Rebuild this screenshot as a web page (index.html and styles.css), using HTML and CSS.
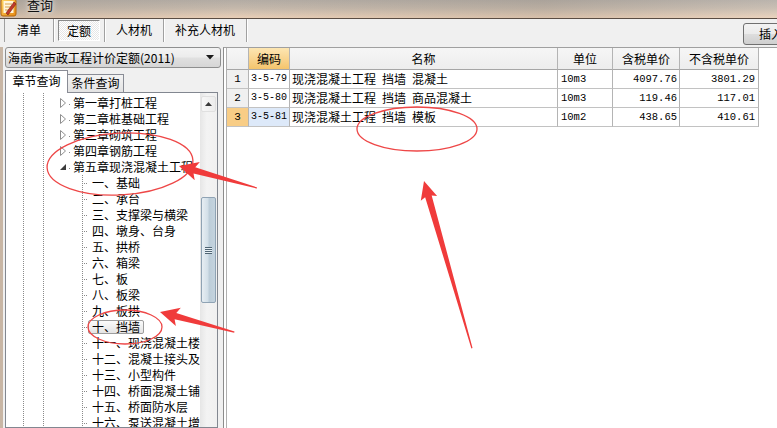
FILE: index.html
```html
<!DOCTYPE html>
<html lang="zh-CN">
<head>
<meta charset="utf-8">
<title>查询</title>
<link rel="stylesheet" href="styles.css">
</head>
<body>
<div class="app">
  <header class="titlebar">
    <svg class="app-icon" width="18" height="18" viewBox="0 0 18 18">
      <defs>
        <linearGradient id="ig" x1="0" y1="0" x2="1" y2="1">
          <stop offset="0" stop-color="#ffd866"/>
          <stop offset="1" stop-color="#e88a12"/>
        </linearGradient>
      </defs>
      <rect x="1" y="0" width="15" height="17" rx="2" fill="url(#ig)" stroke="#b5650a"/>
      <rect x="3.5" y="2" width="10" height="12" fill="#fff6dc"/>
      <path d="M5 5h7M5 8h7M5 11h5" stroke="#d9a24a" stroke-width="1"/>
      <path d="M6 14 L14 3 L16 5 L8 16 Z" fill="#c0392b" stroke="#7a2016" stroke-width="0.6"/>
    </svg>
    <span class="title">查询</span>
  </header>

  <div class="toolbar">
    <nav class="tabs">
      <div class="tab t1">清单</div>
      <div class="tab t2"><span class="pressed">定额</span></div>
      <div class="tab t3">人材机</div>
      <div class="tab t4">补充人材机</div>
    </nav>
    <button class="insert-btn" type="button">插入</button>
  </div>

  <div class="main">
    <aside class="left">
      <div class="select">
        <span class="select-text">海南省市政工程计价定额(2011)</span>
        <svg class="select-arrow" width="8" height="5" viewBox="0 0 8 5"><path d="M0 0h8L4 4.5z" fill="#1a1a1a"/></svg>
      </div>
      <div class="subtabs">
        <div class="subtab active">章节查询</div>
        <div class="subtab">条件查询</div>
      </div>
      <div class="tree-box">
        <div class="tree">
          <div class="chapter">
            <svg class="tw" width="13" height="16" viewBox="0 0 13 16"><path d="M0.5 3.5 L5.5 8 L0.5 12.5 Z" fill="#fff" stroke="#8e8e8e"/><rect x="9" y="9" width="1" height="1" fill="#8a8a8a"/></svg>
            <span>第一章打桩工程</span>
          </div>
          <div class="chapter">
            <svg class="tw" width="13" height="16" viewBox="0 0 13 16"><path d="M0.5 3.5 L5.5 8 L0.5 12.5 Z" fill="#fff" stroke="#8e8e8e"/><rect x="9" y="9" width="1" height="1" fill="#8a8a8a"/></svg>
            <span>第二章桩基础工程</span>
          </div>
          <div class="chapter">
            <svg class="tw" width="13" height="16" viewBox="0 0 13 16"><path d="M0.5 3.5 L5.5 8 L0.5 12.5 Z" fill="#fff" stroke="#8e8e8e"/><rect x="9" y="9" width="1" height="1" fill="#8a8a8a"/></svg>
            <span>第三章砌筑工程</span>
          </div>
          <div class="chapter">
            <svg class="tw" width="13" height="16" viewBox="0 0 13 16"><path d="M0.5 3.5 L5.5 8 L0.5 12.5 Z" fill="#fff" stroke="#8e8e8e"/><rect x="9" y="9" width="1" height="1" fill="#8a8a8a"/></svg>
            <span>第四章钢筋工程</span>
          </div>
          <div class="chapter">
            <svg class="tw" width="13" height="16" viewBox="0 0 13 16"><path d="M6 5 L6 11 L0 11 Z" fill="#3c3c3c"/><rect x="9" y="9" width="1" height="1" fill="#8a8a8a"/></svg>
            <span>第五章现浇混凝土工程</span>
          </div>
          <div class="children">
            <div class="leaf"><span class="label">一、基础</span></div>
            <div class="leaf"><span class="label">二、承台</span></div>
            <div class="leaf"><span class="label">三、支撑梁与横梁</span></div>
            <div class="leaf"><span class="label">四、墩身、台身</span></div>
            <div class="leaf"><span class="label">五、拱桥</span></div>
            <div class="leaf"><span class="label">六、箱梁</span></div>
            <div class="leaf"><span class="label">七、板</span></div>
            <div class="leaf"><span class="label">八、板梁</span></div>
            <div class="leaf"><span class="label">九、板拱</span></div>
            <div class="leaf"><span class="label selected">十、挡墙</span></div>
            <div class="leaf"><span class="label">十一、现浇混凝土楼梯</span></div>
            <div class="leaf"><span class="label">十二、混凝土接头及灌缝</span></div>
            <div class="leaf"><span class="label">十三、小型构件</span></div>
            <div class="leaf"><span class="label">十四、桥面混凝土铺装</span></div>
            <div class="leaf"><span class="label">十五、桥面防水层</span></div>
            <div class="leaf"><span class="label">十六、泵送混凝土增加费</span></div>
          </div>
        </div>
        <div class="vscroll">
          <div class="sb-up">
            <svg width="7" height="4" viewBox="0 0 7 4"><path d="M0 4 L3.5 0 L7 4 Z" fill="#3a3a3a"/></svg>
          </div>
          <div class="sb-thumb">
            <span class="grip"></span>
          </div>
        </div>
      </div>
    </aside>

    <section class="grid-wrap">
      <div class="grid-area">
        <table class="grid">
          <thead>
            <tr>
              <th class="c-no"></th>
              <th class="c-code hl">编码</th>
              <th class="c-name">名称</th>
              <th class="c-unit">单位</th>
              <th class="c-tax">含税单价</th>
              <th class="c-notax">不含税单价</th>
            </tr>
          </thead>
          <tbody>
            <tr>
              <td class="no mono">1</td>
              <td class="mono code">3-5-79</td>
              <td>现浇混凝土工程&ensp;挡墙&ensp;混凝土</td>
              <td class="mono">10m3</td>
              <td class="mono r">4097.76</td>
              <td class="mono r">3801.29</td>
            </tr>
            <tr>
              <td class="no mono">2</td>
              <td class="mono code">3-5-80</td>
              <td>现浇混凝土工程&ensp;挡墙&ensp;商品混凝土</td>
              <td class="mono">10m3</td>
              <td class="mono r">119.46</td>
              <td class="mono r">117.01</td>
            </tr>
            <tr class="current">
              <td class="no mono">3</td>
              <td class="mono code cur-cell">3-5-81</td>
              <td>现浇混凝土工程&ensp;挡墙&ensp;模板</td>
              <td class="mono">10m2</td>
              <td class="mono r">438.65</td>
              <td class="mono r">410.61</td>
            </tr>
          </tbody>
        </table>
      </div>
    </section>
  </div>

  <svg class="annot" width="777" height="428" viewBox="0 0 777 428">
    <g fill="none" stroke="#ee4747" stroke-width="1.3">
      <ellipse cx="120" cy="164" rx="73" ry="31" transform="rotate(-3 120 164)"/>
      <ellipse cx="125" cy="327" rx="37" ry="17"/>
      <ellipse cx="417" cy="129" rx="60" ry="22"/>
    </g>
    <g fill="#f03b3b">
      <polygon transform="translate(179 166) rotate(15.75)" points="0,0 19,-9.5 16,-3.2 81,-0.6 81,0.6 16,3.2 19,9.5"/>
      <polygon transform="translate(160 312) rotate(15.1)" points="0,0 19,-9.5 16,-3.2 77,-0.6 77,0.6 16,3.2 19,9.5"/>
      <polygon transform="translate(424 181) rotate(74)" points="0,0 18,-8.5 16,-3.4 174,-0.6 174,0.6 16,3.4 18,8.5"/>
    </g>
  </svg>
</div>
</body>
</html>
```

FILE: styles.css
```css
* { box-sizing: border-box; }

html, body {
  margin: 0;
  padding: 0;
}

body {
  width: 777px;
  height: 428px;
  overflow: hidden;
  background: #f0f0f0;
  font-family: "Noto Sans CJK SC", "Noto Sans", sans-serif;
  font-size: 12px;
  color: #000;
}

.app {
  position: relative;
  display: flex;
  flex-direction: column;
  height: 428px;
  overflow: hidden;
}

/* ---------- title bar ---------- */
.titlebar {
  flex: none;
  height: 19px;
  display: flex;
  align-items: flex-start;
  border-bottom: 1px solid #5a4d44;
  background:
    linear-gradient(to right, rgba(150,140,130,0.25), rgba(255,255,255,0) 30%, rgba(120,110,100,0.15) 70%, rgba(255,255,255,0.1)),
    linear-gradient(to bottom, #b3aca4 0%, #c4b8ab 45%, #e9cfb7 100%);
  overflow: hidden;
}

.app-icon {
  flex: none;
  margin-top: -1px;
}

.title {
  margin-left: 9px;
  margin-top: -3px;
  font-size: 13px;
  line-height: 15px;
  color: #111;
  text-shadow: 0 0 4px rgba(255,255,255,0.8), 0 0 8px rgba(255,255,255,0.6);
}

/* ---------- toolbar ---------- */
.toolbar {
  flex: none;
  height: 28px;
  display: flex;
  align-items: flex-start;
  padding-left: 4px;
}

.tabs {
  display: flex;
  height: 23px;
  border-left: 1px solid #a0a0a0;
}

.tab {
  display: flex;
  align-items: center;
  justify-content: center;
  height: 23px;
  border-right: 1px solid #a0a0a0;
  box-shadow: 1px 0 0 #fff;
  line-height: 14px;
  padding-bottom: 1px;
}

.t1 { width: 49px; }
.t2 { width: 51px; }
.t3 { width: 59px; }
.t4 { width: 83px; }

.pressed {
  display: flex;
  align-items: center;
  justify-content: center;
  width: 42px;
  height: 21px;
  margin-top: 1px;
  border: 1px solid;
  border-color: #8a8a8a #ffffff #ffffff #8a8a8a;
  background: repeating-conic-gradient(#ffffff 0 25%, #e6e6e6 0 50%) 0 0 / 2px 2px;
}

.insert-btn {
  margin-left: auto;
  margin-top: 4px;
  margin-right: -26px;
  width: 60px;
  height: 22px;
  padding: 0 0 0 15px;
  text-align: left;
  border: 1px solid #707070;
  border-radius: 3px;
  background: linear-gradient(#f3f3f3 0%, #ebebeb 48%, #dddddd 52%, #cfcfcf 100%);
  font-family: inherit;
  font-size: 12px;
  line-height: 14px;
  color: #000;
}

/* ---------- main ---------- */
.main {
  flex: 1;
  min-height: 0;
  display: flex;
  padding-left: 4px;
  background: linear-gradient(to right, #c8b6a5 0 3px, #f0f0f0 3px);
}

.left {
  flex: none;
  width: 219px;
  display: flex;
  flex-direction: column;
  min-height: 0;
}

.select {
  flex: none;
  margin-left: 1px;
  width: 216px;
  height: 21px;
  display: flex;
  align-items: center;
  padding-left: 2px;
  border: 1px solid #8e8f8f;
  border-radius: 3px;
  background: linear-gradient(#f3f3f3 0%, #ececec 48%, #e0e0e0 52%, #d6d6d6 100%);
  line-height: 14px;
}

.select-arrow {
  margin-left: auto;
  margin-right: 6px;
}

.subtabs {
  flex: none;
  position: relative;
  z-index: 1;
  display: flex;
  align-items: flex-end;
  height: 23px;
  margin-top: 2px;
  margin-left: 1px;
  margin-bottom: -1px;
}

.subtab {
  display: flex;
  align-items: center;
  justify-content: center;
  width: 56px;
  height: 19px;
  padding-bottom: 1px;
  border: 1px solid #898c95;
  border-left: none;
  background: linear-gradient(#f3f3f3, #e3e3e3);
  line-height: 14px;
}

.subtab.active {
  width: 63px;
  height: 23px;
  padding-bottom: 3px;
  border: 1px solid #898c95;
  border-bottom: none;
  background: #fff;
}

.tree-box {
  flex: 1;
  min-height: 0;
  margin-left: 1px;
  width: 213px;
  display: flex;
  border: 1px solid #828790;
  background: #fff;
  overflow: hidden;
}

.tree {
  flex: 1;
  min-width: 0;
  padding-top: 2px;
  overflow: hidden;
  background-image:
    linear-gradient(#8a8a8a 50%, transparent 50%),
    linear-gradient(#8a8a8a 50%, transparent 50%);
  background-size: 1px 2px;
  background-position: 17px 0, 37px 0;
  background-repeat: repeat-y;
}

.chapter {
  height: 16px;
  display: flex;
  align-items: center;
  padding-left: 54px;
  white-space: nowrap;
  line-height: 16px;
}

.tw { flex: none; }

.children {
  background-image: linear-gradient(#8a8a8a 50%, transparent 50%);
  background-size: 1px 2px;
  background-position: 76px 0;
  background-repeat: repeat-y;
}

.leaf {
  height: 16px;
  display: flex;
  align-items: center;
  padding-left: 76px;
  white-space: nowrap;
}

.leaf::before {
  content: "";
  flex: none;
  width: 6px;
  height: 1px;
  margin-top: 1px;
  background-image: linear-gradient(to right, #8a8a8a 50%, transparent 50%);
  background-size: 2px 1px;
  background-repeat: repeat-x;
}

.label {
  padding: 0 3px;
  border: 1px solid transparent;
  border-radius: 2px;
  line-height: 12px;
  height: 14px;
}

.label.selected {
  border-color: #9d9d9d;
  background: linear-gradient(#fbfbfb, #e4e4e4);
}

.vscroll {
  flex: none;
  width: 17px;
  display: flex;
  flex-direction: column;
  padding: 3px 1px 0 1px;
  background: linear-gradient(to right, #e6e6e6, #f3f3f3 40%, #f0f0f0);
}

.sb-up {
  height: 16px;
  display: flex;
  align-items: center;
  justify-content: center;
  border: 1px solid #e0e0e0;
  border-radius: 2px;
  background: linear-gradient(to right, #f7f7f7, #ececec);
}

.sb-thumb {
  margin-top: 85px;
  height: 106px;
  display: flex;
  align-items: center;
  justify-content: center;
  border: 1px solid #8fa3b4;
  border-radius: 2px;
  background: linear-gradient(to right, #e7eef3 0%, #d2dfe8 45%, #bccdd9 55%, #c4d3de 100%);
}

.grip {
  width: 7px;
  height: 7px;
  background: repeating-linear-gradient(to bottom, #4f6473 0 1px, #e8f0f5 1px 2px);
}

/* ---------- grid ---------- */
.grid-wrap {
  flex: 1;
  min-width: 0;
  display: flex;
  border-left: 1px solid #8c8c8c;
  border-top: 1px solid #a0a0a0;
  padding-left: 2px;
  background: #fff;
}

.grid-area {
  flex: 1;
  border-left: 1px solid #b0b0b0;
}

.grid {
  table-layout: fixed;
  border-collapse: separate;
  border-spacing: 0;
  width: 532px;
}

.grid th,
.grid td {
  padding: 0 2px;
  white-space: nowrap;
  overflow: hidden;
  border-right: 1px solid #b4b4b4;
  border-bottom: 1px solid #c2c2c2;
}

.grid th {
  height: 22px;
  font-weight: normal;
  text-align: center;
  line-height: 14px;
  background: linear-gradient(#f6f6f6, #ededed);
  border-bottom-color: #a6a6a6;
}

.grid th.hl {
  background: linear-gradient(#fde6b2 0%, #f9d591 50%, #f4c56c 100%);
}

.c-no { width: 22px; }
.c-code { width: 41px; }
.c-name { width: 268px; }
.c-unit { width: 55px; }
.c-tax { width: 67px; }
.c-notax { width: 79px; }

.grid td {
  height: 19px;
  line-height: 14px;
}

.grid td.mono {
  font-family: "Liberation Mono", "DejaVu Sans Mono", monospace;
  font-size: 10.5px;
}

.grid td.code {
  font-size: 10px;
  letter-spacing: 0;
}

.grid td.no {
  text-align: center;
  background: #f0f0f0;
  font-size: 11px;
}

.grid td.r {
  text-align: right;
}

.grid td.r:last-child {
  padding-right: 3px;
}

.grid tr.current td.no {
  background: #f8cd86;
}

.grid td.cur-cell {
  background: #dde9f9;
}

.grid td:nth-child(4) {
  padding-left: 3px;
}

/* ---------- annotations ---------- */
.annot {
  position: absolute;
  left: 0;
  top: 0;
  pointer-events: none;
}
```
